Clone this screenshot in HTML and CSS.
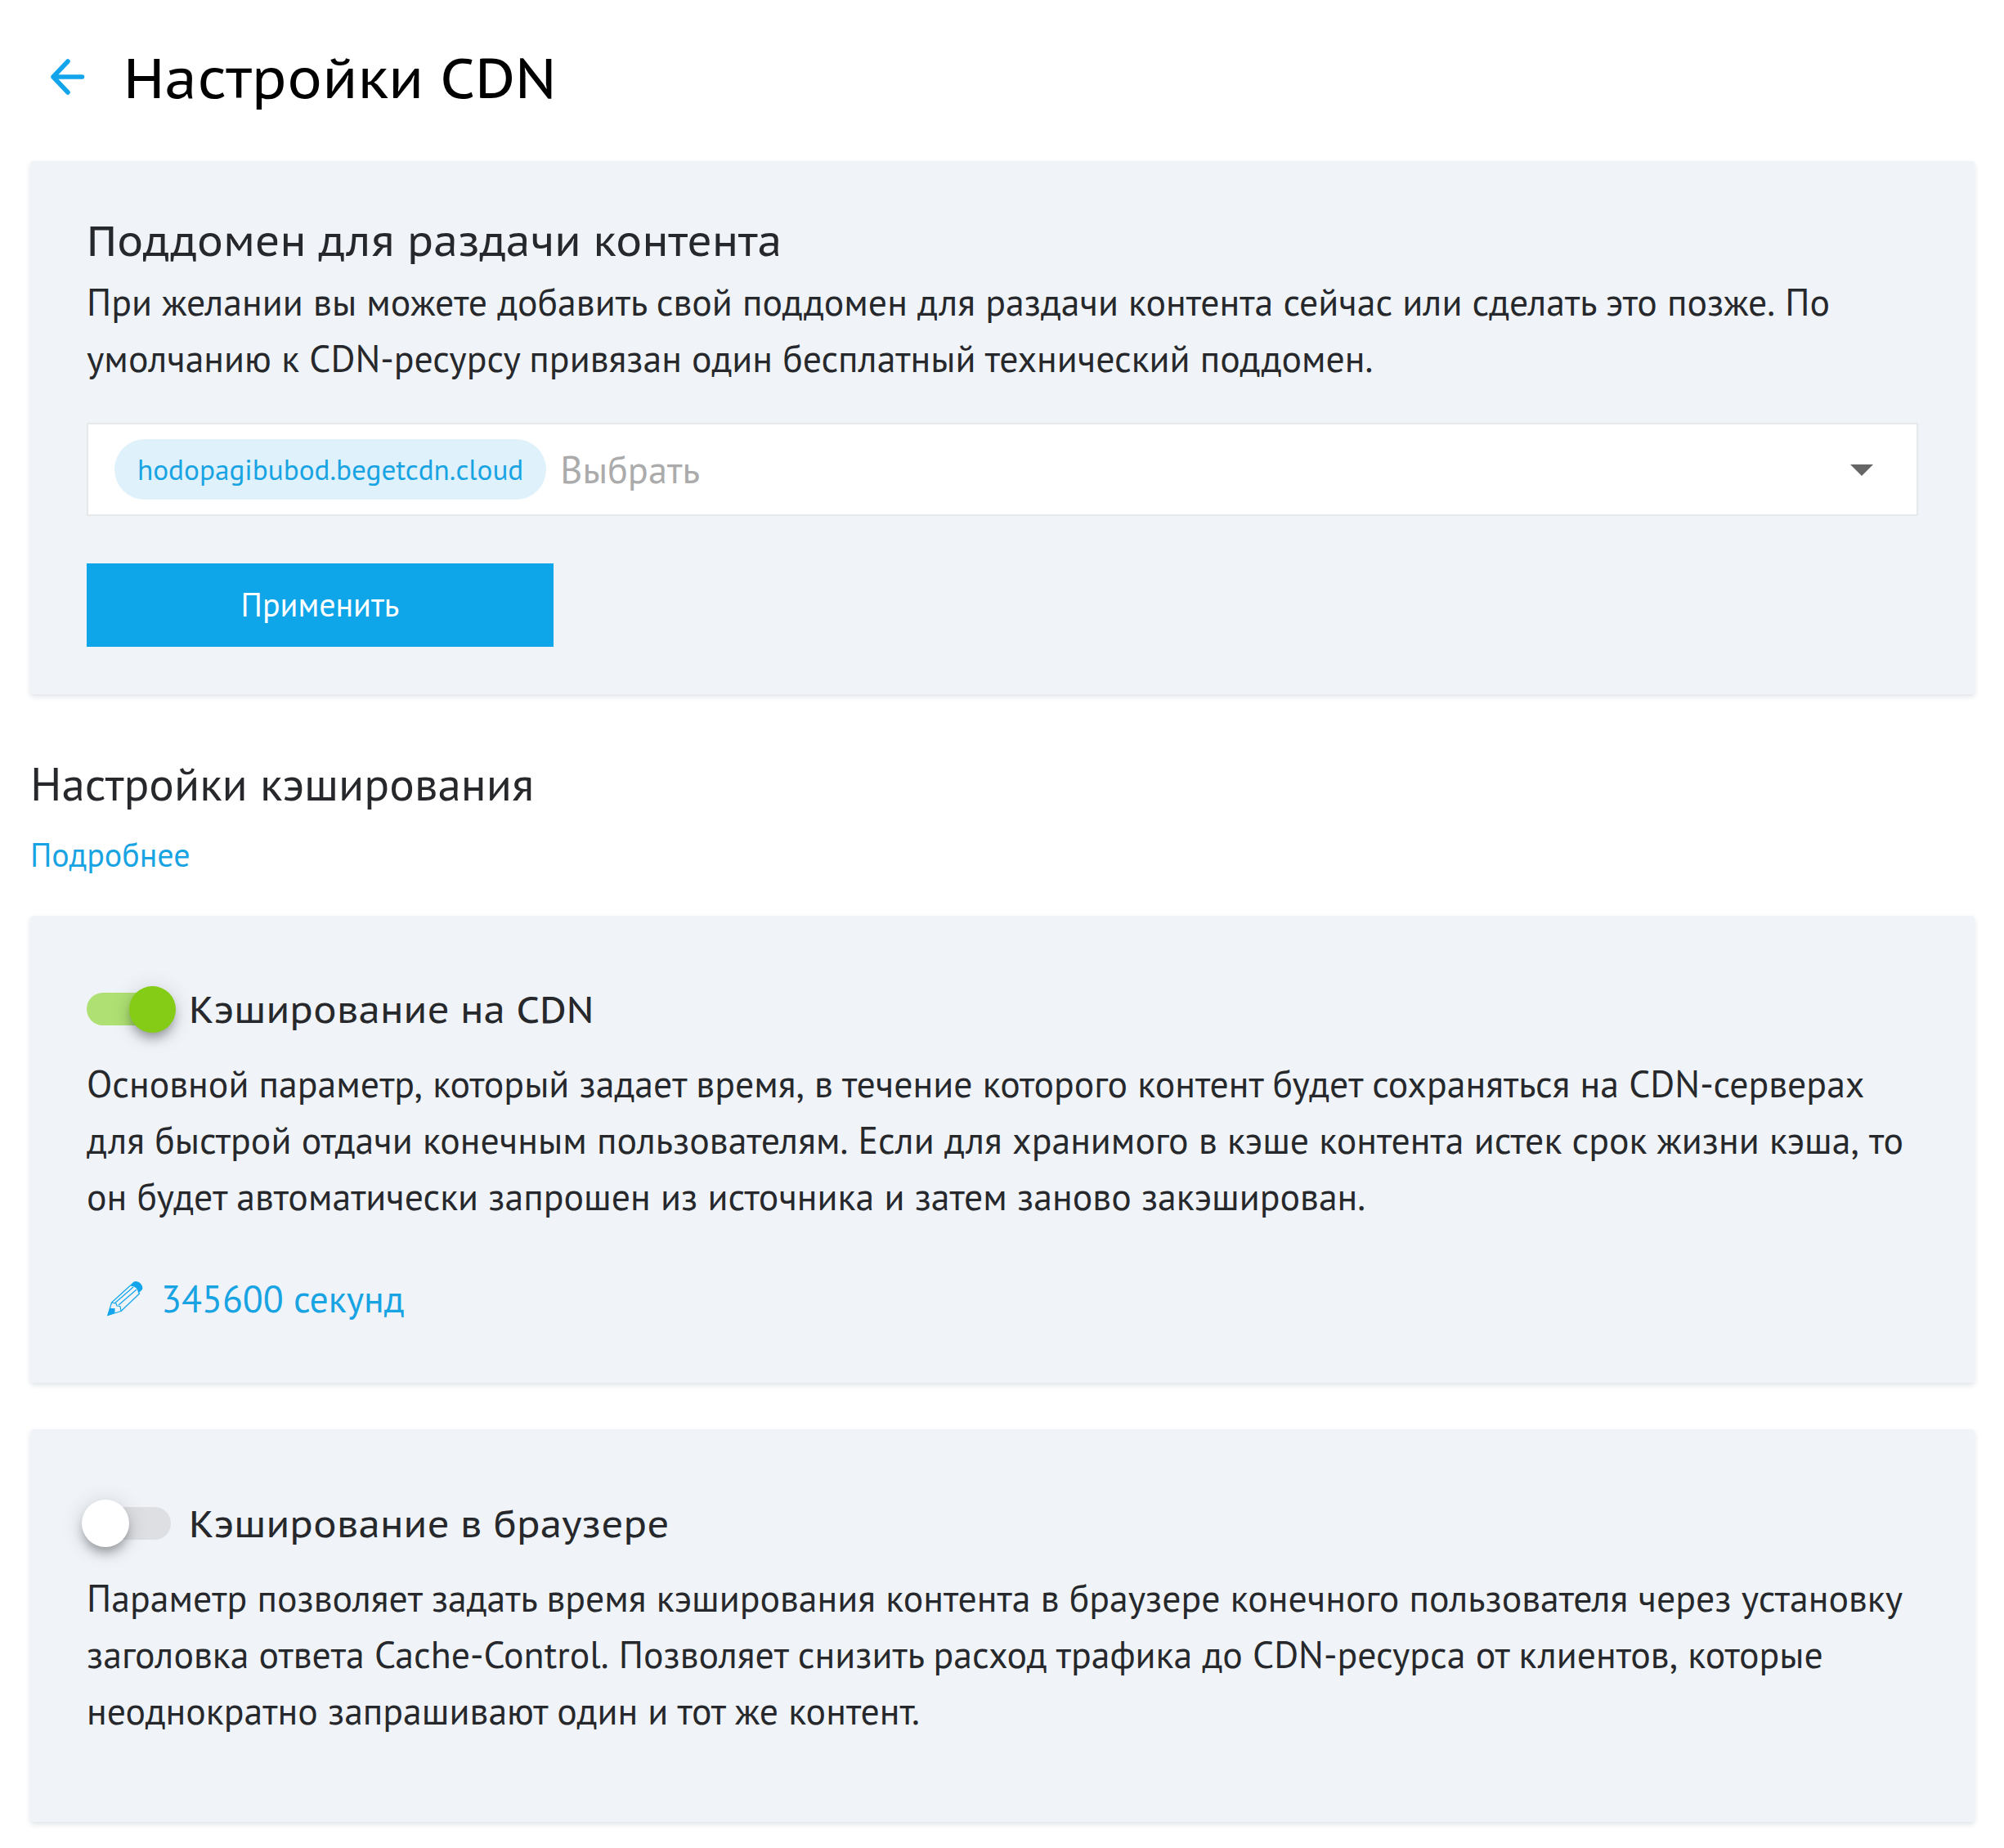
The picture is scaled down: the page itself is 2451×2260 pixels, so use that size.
FILE: index.html
```html
<!DOCTYPE html>
<html lang="ru">
<head>
  <meta charset="UTF-8">
  <meta name="viewport" content="width=device-width, initial-scale=1.0">
  <title>Настройки CDN</title>
  <link rel="stylesheet" href="styles.css">
</head>
<body>
  <header class="page-header">
    <a class="back" href="#" aria-label="Назад">
      <svg width="42" height="44" viewBox="0 0 42 44" fill="none">
        <path d="M21 3L3 22L21 41M3 22H38.500" stroke="#12A5EB" stroke-width="5.500" stroke-linecap="round" stroke-linejoin="round"/>
      </svg>
    </a>
    <h1>Настройки CDN</h1>
  </header>

  <section class="card card-domain">
    <h3>Поддомен для раздачи контента</h3>
    <p>При желании вы можете добавить свой поддомен для раздачи контента сейчас или сделать это позже.<span class="space"> </span>По<br>
      умолчанию к CDN-ресурсу привязан один бесплатный технический поддомен.</p>
    <div class="select">
      <span class="chip">hodopagibubod.begetcdn.cloud</span>
      <span class="placeholder">Выбрать</span>
      <span class="caret"></span>
    </div>
    <button class="apply-button">Применить</button>
  </section>

  <h2>Настройки кэширования</h2>
  <a class="more" href="#">Подробнее</a>

  <section class="card card-cdn">
    <div class="switch-row">
      <span class="switch on"><span class="thumb"></span></span>
      <span class="switch-label">Кэширование на CDN</span>
    </div>
    <p>Основной параметр,<span class="space"> </span>который задает время,<span class="space"> </span>в течение которого контент будет сохраняться на CDN-серверах<br>
      для быстрой отдачи конечным пользователям.<span class="space"> </span>Если для хранимого в кэше контента истек срок жизни кэша,<span class="space"> </span>то<br>
      он будет автоматически запрошен из источника и затем заново закэширован.</p>
    <a class="edit" href="#">
      <svg width="44" height="44" viewBox="0 0 44 44" fill="none" stroke="#12A5EB" stroke-width="1.200" stroke-linejoin="round">
        <path d="M5.500 27L28.500 6M17 37.500L40 15.500M9 28L32 8M14 30L36 11" />
        <path d="M5.500 27L1 42.500L17 37.500L16 31.500L12 31L11 28L5.500 27Z" />
        <path d="M3.200 34H9.500V39.500L0 43.500Z" fill="#12A5EB" stroke="none"/>
        <path d="M27.500 6.500L32 2C37 -1.500 45 5 43 11L38 16C38 10 34 6.500 27.500 6.500Z" fill="#12A5EB" stroke="none"/>
      </svg>
      <span>345600 секунд</span>
    </a>
  </section>

  <section class="card card-browser">
    <div class="switch-row">
      <span class="switch"><span class="thumb"></span></span>
      <span class="switch-label">Кэширование в браузере</span>
    </div>
    <p>Параметр позволяет задать время кэширования контента в браузере конечного пользователя через установку<br>
      заголовка ответа Cache-Control.<span class="space"> </span>Позволяет снизить расход трафика до CDN-ресурса от клиентов,<span class="space"> </span>которые<br>
      неоднократно запрашивают один и тот же контент.</p>
  </section>
</body>
</html>
```
FILE: styles.css
```css
* {
  box-sizing: border-box;
}

body {
  margin: 0;
  padding: 0 36px 32px 37px;
  background: #FFFFFF;
  color: #26282B;
  font: 45.8px/68.9px "PT Sans", "Noto Sans", sans-serif;
}

h1, h2, h3, p {
  margin: 0;
  font-weight: 400;
}

a {
  color: #18A3E3;
  text-decoration: none;
}

.page-header {
  display: flex;
  align-items: center;
  gap: 47px;
  height: 197px;
  padding: 0 0 9px 25px;
}

.back {
  display: flex;
}

h1 {
  padding-top: 2px;
  color: #000000;
  font: 68.6px/90px "PT Sans Caption", "PT Sans", "Noto Sans", sans-serif;
}

h2 {
  margin-top: 69px;
  font-size: 57.2px;
  line-height: 80px;
}

h3 {
  margin-bottom: 1px;
  font: 51.4px/79px "PT Sans Caption", "PT Sans", "Noto Sans", sans-serif;
}

p {
  white-space: nowrap;
}

/* keeps the full gap after commas and periods */
.space {
  font-kerning: none;
}

.card {
  padding: 85px 69px 0 69px;
  background: #F0F4F9;
  border-radius: 4px;
  box-shadow: 0 3px 6px rgba(30, 60, 90, 0.14);
}

.card-domain {
  height: 652px;
  padding-top: 58px;
}

.card-cdn {
  height: 571px;
  margin-top: 45px;
}

.card-browser {
  height: 480px;
  margin-top: 57px;
  padding-top: 86px;
}

.select {
  display: flex;
  align-items: center;
  height: 114px;
  margin-top: 44px;
  padding: 0 53px 0 32px;
  border: 2px solid #E6E8EA;
  background: #FFFFFF;
}

.chip {
  height: 74px;
  padding: 0 28px;
  border-radius: 37px;
  background: #DFF2FC;
  color: #18A3E3;
  font-size: 35.2px;
  line-height: 74px;
}

.placeholder {
  margin-left: 17px;
  padding-top: 2px;
  color: #ABABAB;
  font-size: 46.4px;
}

.caret {
  margin: 3px 0 0 auto;
  border: 14px solid transparent;
  border-top-color: #666666;
  border-bottom: 0;
}

.apply-button {
  display: block;
  width: 571px;
  height: 102px;
  margin-top: 58px;
  padding: 0 0 2px;
  border: none;
  background: #0FA5E9;
  color: #FFFFFF;
  font: 40px/100px "PT Sans", "Noto Sans", sans-serif;
}

.more {
  display: block;
  margin-top: 17px;
  font-size: 40px;
  line-height: 60px;
}

.switch-row {
  display: flex;
  align-items: center;
  height: 58px;
  margin-bottom: 28px;
}

.switch {
  display: flex;
  align-items: center;
  width: 103px;
  height: 40px;
  margin-right: 22px;
  border-radius: 20px;
  background: #DEDFE3;
}

.switch .thumb {
  flex: none;
  width: 58px;
  height: 58px;
  margin-left: -6px;
  border-radius: 50%;
  background: #FFFFFF;
  box-shadow: 0 9px 14px -3px rgba(0, 0, 0, 0.35), 0 3px 28px rgba(0, 0, 0, 0.14);
}

.switch.on {
  background: #AEE073;
}

.switch.on .thumb {
  width: 57px;
  height: 57px;
  margin-left: 52px;
  background: #84CC16;
}

.switch-label {
  font: 45.7px/58px "PT Sans Caption", "PT Sans", "Noto Sans", sans-serif;
}

.edit {
  display: flex;
  align-items: center;
  gap: 22px;
  margin-top: 56px;
  padding-left: 25px;
}
```
